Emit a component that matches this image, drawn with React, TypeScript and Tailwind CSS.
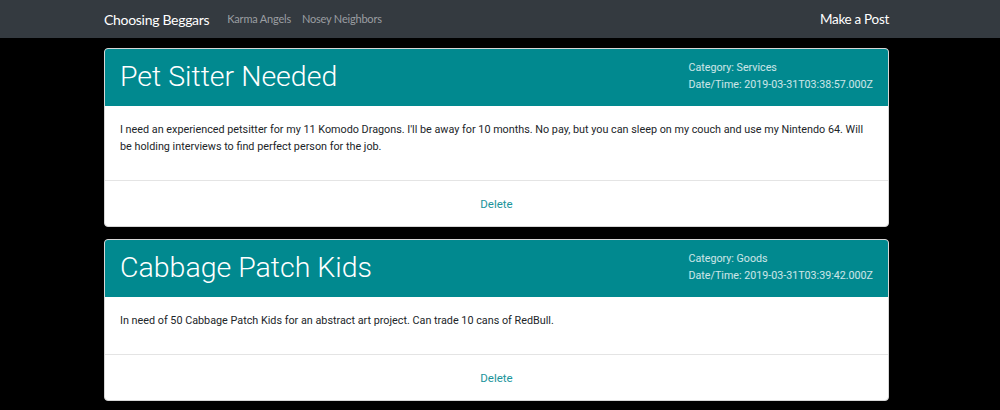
import React from 'react';

type Post = {
  title: string;
  category: string;
  date: string;
  body: string;
};

const posts: Post[] = [
  {
    title: 'Pet Sitter Needed',
    category: 'Services',
    date: '2019-03-31T03:38:57.000Z',
    body: "I need an experienced petsitter for my 11 Komodo Dragons. I'll be away for 10 months. No pay, but you can sleep on my couch and use my Nintendo 64. Will be holding interviews to find perfect person for the job.",
  },
  {
    title: 'Cabbage Patch Kids',
    category: 'Goods',
    date: '2019-03-31T03:39:42.000Z',
    body: 'In need of 50 Cabbage Patch Kids for an abstract art project. Can trade 10 cans of RedBull.',
  },
];

function PostCard({ post }: { post: Post }) {
  return (
    <div className="overflow-hidden rounded-[4px] border border-[#d6d6d6] bg-white">
      {/* header */}
      <div className="flex h-[57px] items-center justify-between bg-[#01898f] px-[15px] text-white">
        <h2 className="text-[28.5px] font-light leading-none">{post.title}</h2>
        <div className="self-start pt-[10px] text-[10.7px] leading-[17px] text-white/80">
          <div>Category: {post.category}</div>
          <div>Date/Time: {post.date}</div>
        </div>
      </div>
      {/* body */}
      <div className="px-[15px] pb-[25px] pt-[15px] text-[10.8px] leading-[17px] text-[#212529]">
        {post.body}
      </div>
      {/* footer */}
      <div className="flex h-[46px] items-center justify-center border-t border-[#e4e4e4] pt-[2px]">
        <span className="text-[11.5px] text-[#1a959b]">Delete</span>
      </div>
    </div>
  );
}

export default function App() {
  return (
    <div className="min-h-[410px] bg-black font-['Roboto','Liberation_Sans',sans-serif]">
      {/* navbar */}
      <nav className="h-[38px] bg-[#343a40] font-['Lato','Liberation_Sans',sans-serif]">
        <div className="ml-[104px] flex h-full w-[785px] items-center">
          <span className="text-[14px] tracking-[-0.3px] text-white">Choosing Beggars</span>
          <span className="ml-[18px] text-[11px] tracking-[-0.2px] text-[#9b9ea2]">Karma Angels</span>
          <span className="ml-[11px] text-[11px] tracking-[-0.2px] text-[#9b9ea2]">Nosey Neighbors</span>
          <span className="ml-auto text-[13.5px] tracking-[-0.3px] text-white">Make a Post</span>
        </div>
      </nav>

      <main className="ml-[104px] flex w-[785px] flex-col gap-[12px] pt-[10px]">
        {posts.map((p) => (
          <PostCard key={p.title} post={p} />
        ))}
      </main>
    </div>
  );
}
